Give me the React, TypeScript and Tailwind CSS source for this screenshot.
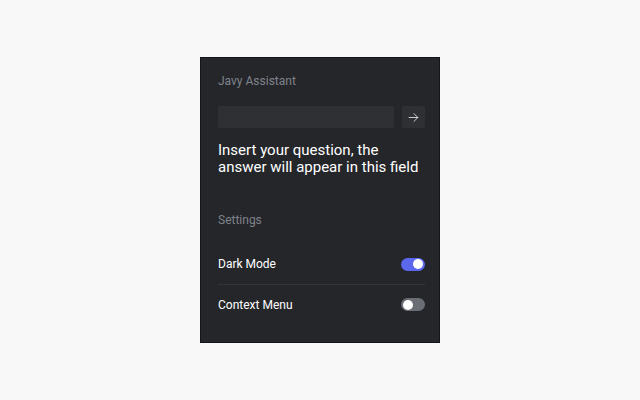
import React from "react";

function Toggle({ on }: { on: boolean }) {
  return (
    <div
      className={
        "w-[24px] h-[13px] rounded-full flex items-center px-[2px] " +
        (on ? "bg-[#5b68ee] justify-end" : "bg-[#6a6e74] justify-start")
      }
    >
      <div className="w-[10px] h-[10px] rounded-full bg-white" />
    </div>
  );
}

export default function App() {
  return (
    <div
      className="w-[640px] h-[400px] bg-[#f8f8f8] flex items-center justify-center"
      style={{ fontFamily: "Roboto, 'Liberation Sans', sans-serif" }}
    >
      <div className="w-[240px] h-[286px] bg-[#25262a] border border-[#141517] flex flex-col pl-[17px] pr-[14px] pt-[15px]">
        <div className="text-[12px] leading-[16px] text-[#7f838a]">Javy Assistant</div>
        <div className="mt-[17px] flex gap-[8px] h-[22px]">
          <div className="flex-1 bg-[#2f3034] rounded-[2px]" />
          <div className="w-[23px] bg-[#2f3034] rounded-[2px] flex items-center justify-center text-[#e6e6e6]">
            <svg width="13" height="13" viewBox="0 0 24 24" fill="none" stroke="currentColor" strokeWidth="1.6" strokeLinecap="round" strokeLinejoin="round">
              <path d="M4 12h16" />
              <path d="m13 5 7 7-7 7" />
            </svg>
          </div>
        </div>
        <div className="mt-[14px] text-[15px] leading-[17px] text-white">
          Insert your question, the answer will appear in this field
        </div>
        <div className="mt-[36px] text-[12px] leading-[16px] text-[#7f838a]">Settings</div>
        <div className="mt-[16px] flex flex-col">
          <div className="h-[41px] flex items-center justify-between border-b border-[#34353a]">
            <span className="text-[12px] text-white">Dark Mode</span>
            <Toggle on={true} />
          </div>
          <div className="h-[39px] flex items-center justify-between">
            <span className="text-[12px] text-white">Context Menu</span>
            <Toggle on={false} />
          </div>
        </div>
      </div>
    </div>
  );
}
